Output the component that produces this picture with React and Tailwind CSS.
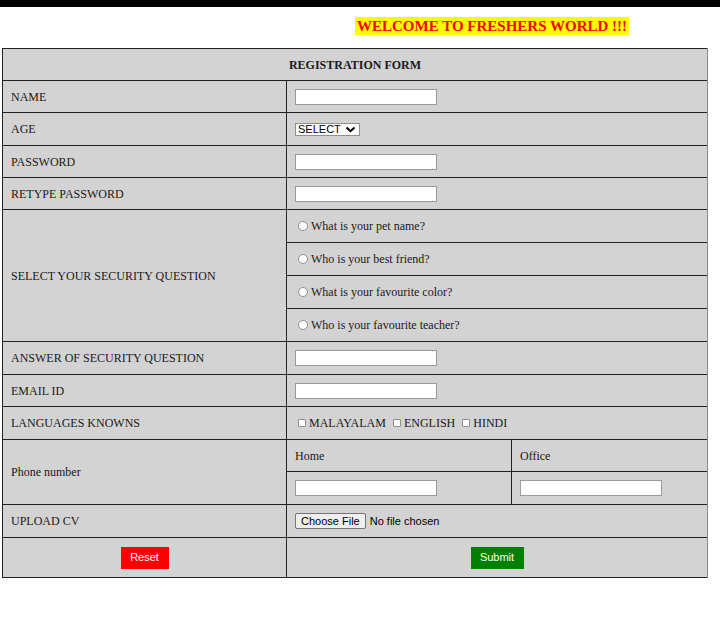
import { useState } from "react";

// Formulaire d'inscription "Freshers World"
const serif = "font-['Liberation_Serif','Times_New_Roman',serif]";
const sans = "font-['Liberation_Sans',Arial,sans-serif]";

const cell = "bg-[#d3d3d3] flex items-center px-[8px]";

const TextInput = () => (
    <input
        type="text"
        className="w-[142px] h-[16px] border border-[#9a9a9a] bg-white outline-none"
    />
);

const questions = [
    "What is your pet name?",
    "Who is your best friend?",
    "What is your favourite color?",
    "Who is your favourite teacher?",
];

const languages = ["MALAYALAM", "ENGLISH", "HINDI"];

const App = () => {
    const [question, setQuestion] = useState("");

    return (
        <div className={`${serif} bg-white min-h-[622px] w-[720px]`}>
            {/* barre noire du haut */}
            <div className="h-[7px] bg-black" />

            <div className="pt-[10px] pl-[355px]">
                <div className="w-fit bg-[#ffff00] text-[#ff0000] font-bold text-[15px] leading-[18px] px-[2px]">
                    WELCOME TO FRESHERS WORLD !!!
                </div>
            </div>

            <form className="mt-[13px] ml-[2px] w-[706px]">
                <div className="grid grid-cols-[283px_224px_195px] grid-rows-[31px_31px_32px_31px_31px_32px_32px_32px_32px_32px_31px_32px_31px_32px_32px_39px] gap-[1px] p-[1px] bg-[#222] border-r border-[#8a8a8a] text-[12px] text-[#1a1a1a]">
                    <div className={`${cell} col-span-3 justify-center font-bold`}>
                        REGISTRATION FORM
                    </div>

                    <div className={cell}>NAME</div>
                    <div className={`${cell} col-span-2`}>
                        <TextInput />
                    </div>

                    <div className={cell}>AGE</div>
                    <div className={`${cell} col-span-2`}>
                        <div className="relative">
                            <select className={`${sans} block appearance-none w-[65px] h-[13px] border border-[#8f8f8f] bg-white text-[11px] leading-[11px] text-black pl-[2px] outline-none`}>
                                <option>SELECT</option>
                            </select>
                            <svg
                                className="absolute right-[4px] top-[3px] pointer-events-none"
                                width="11"
                                height="7"
                                viewBox="0 0 11 7"
                            >
                                <path
                                    d="M1.5 1.5 L5.5 5.2 L9.5 1.5"
                                    fill="none"
                                    stroke="#000"
                                    strokeWidth="2"
                                />
                            </svg>
                        </div>
                    </div>

                    <div className={cell}>PASSWORD</div>
                    <div className={`${cell} col-span-2`}>
                        <TextInput />
                    </div>

                    <div className={cell}>RETYPE PASSWORD</div>
                    <div className={`${cell} col-span-2`}>
                        <TextInput />
                    </div>

                    {/* Questions de sécurité */}
                    <div className={`${cell} row-span-4`}>
                        SELECT YOUR SECURITY QUESTION
                    </div>
                    {questions.map((q) => (
                        <label
                            key={q}
                            className={`${cell} col-span-2 pl-[11px] gap-[3px] cursor-pointer`}
                        >
                            <input
                                type="radio"
                                name="question"
                                checked={question === q}
                                onChange={() => setQuestion(q)}
                                className="appearance-none m-0 w-[10px] h-[10px] rounded-full border border-[#8f8f8f] bg-white checked:bg-[#1a73e8]"
                            />
                            {q}
                        </label>
                    ))}

                    <div className={cell}>ANSWER OF SECURITY QUESTION</div>
                    <div className={`${cell} col-span-2`}>
                        <TextInput />
                    </div>

                    <div className={cell}>EMAIL ID</div>
                    <div className={`${cell} col-span-2`}>
                        <TextInput />
                    </div>

                    <div className={cell}>LANGUAGES KNOWNS</div>
                    <div className={`${cell} col-span-2 pl-[11px]`}>
                        {languages.map((lang) => (
                            <label
                                key={lang}
                                className="flex items-center gap-[3px] mr-[7px]"
                            >
                                <input
                                    type="checkbox"
                                    className="appearance-none m-0 w-[8px] h-[8px] rounded-[1px] border border-[#8f8f8f] bg-white"
                                />
                                {lang}
                            </label>
                        ))}
                    </div>

                    {/* Numéros de téléphone */}
                    <div className={`${cell} row-span-2`}>Phone number</div>
                    <div className={cell}>Home</div>
                    <div className={cell}>Office</div>
                    <div className={cell}>
                        <TextInput />
                    </div>
                    <div className={cell}>
                        <TextInput />
                    </div>

                    <div className={cell}>UPLOAD CV</div>
                    <div className={`${cell} col-span-2 ${sans} text-[11px] text-black gap-[4px]`}>
                        <button
                            type="button"
                            className="h-[16px] px-[5px] bg-[#efefef] border border-[#767676] rounded-[2px] text-[11px] leading-[14px]"
                        >
                            Choose File
                        </button>
                        No file chosen
                    </div>

                    <div className={`${cell} justify-center`}>
                        <button
                            type="reset"
                            className={`${sans} w-[48px] h-[22px] bg-[#ff0000] text-white text-[11px]`}
                        >
                            Reset
                        </button>
                    </div>
                    <div className={`${cell} col-span-2 justify-center`}>
                        <button
                            type="submit"
                            className={`${sans} w-[53px] h-[22px] bg-[#008000] text-white text-[11px]`}
                        >
                            Submit
                        </button>
                    </div>
                </div>
            </form>
        </div>
    );
};

export default App;
